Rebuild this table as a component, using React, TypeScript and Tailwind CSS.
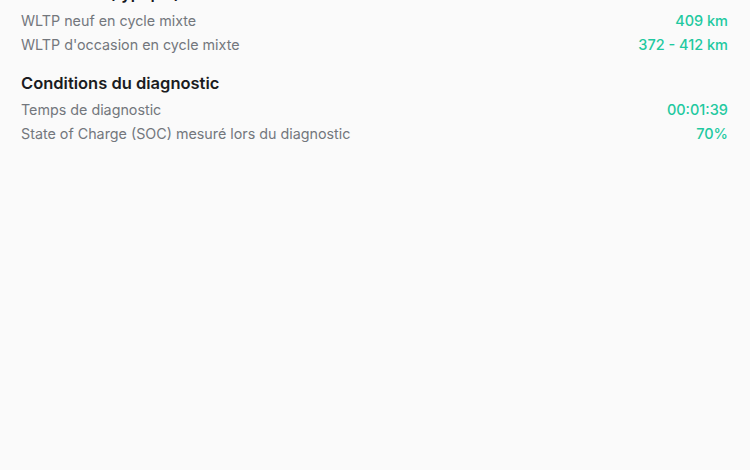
const rowsA = [
  { label: "WLTP neuf en cycle mixte", value: "409 km" },
  { label: "WLTP d'occasion en cycle mixte", value: "372 - 412 km" },
];

const rowsB = [
  { label: "Temps de diagnostic", value: "00:01:39" },
  { label: "State of Charge (SOC) mesuré lors du diagnostic", value: "70%" },
];

function Row({ label, value }: { label: string; value: string }) {
  return (
    <div className="flex items-center justify-between h-6">
      <span className="text-[#73777d] text-[14.3px]">{label}</span>
      <span className="text-[#1fc9a0] text-[14.5px] font-medium">{value}</span>
    </div>
  );
}

export default function App() {
  return (
    <div
      className="w-[750px] h-[470px] overflow-hidden bg-[#fafafa]"
      style={{ fontFamily: "Inter, 'Noto Sans', sans-serif" }}
    >
      <div className="pl-[21px] pr-[22px] mt-[-15px]">
        <h3 className="h-6 leading-[17px] text-[16px] font-semibold text-[#16181d]">Autonomie (typique)</h3>
        <div>
          {rowsA.map((r) => (
            <Row key={r.label} {...r} />
          ))}
        </div>
        <h3 className="mt-[13px] mb-[2px] h-[26px] flex items-center text-[16.5px] font-semibold text-[#1a1c21]">
          Conditions du diagnostic
        </h3>
        <div>
          {rowsB.map((r) => (
            <Row key={r.label} {...r} />
          ))}
        </div>
      </div>
    </div>
  );
}
